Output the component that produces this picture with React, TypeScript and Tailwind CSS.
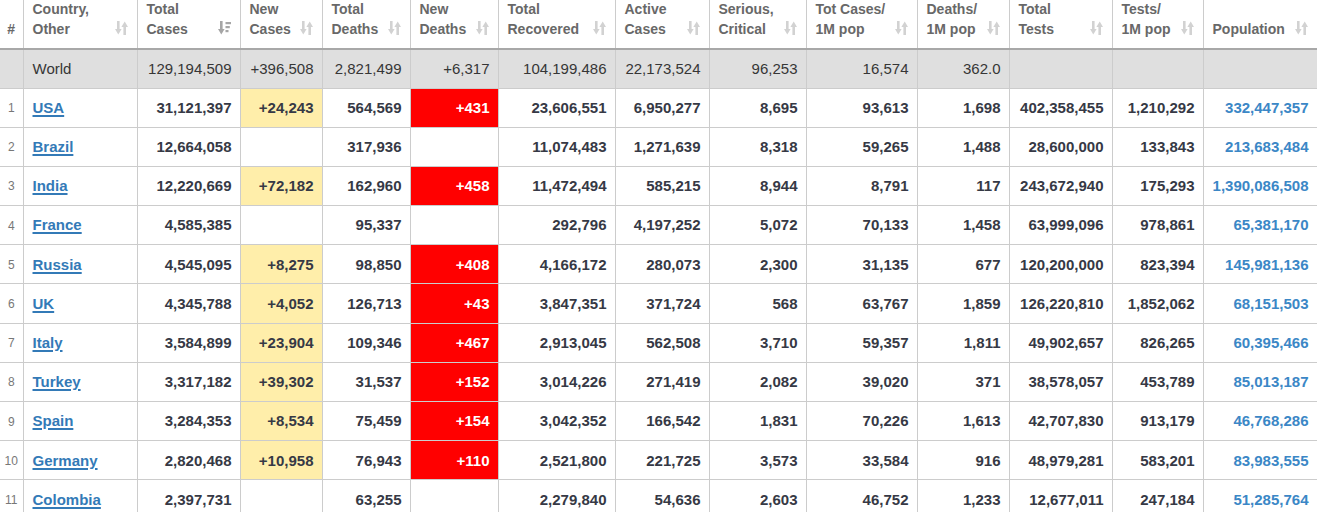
import React from 'react';

type Row = {
  n: number;
  country: string;
  v: string[];
};

const headers: { lines: string[]; sorted?: boolean }[] = [
  { lines: ['', '#'] },
  { lines: ['Country,', 'Other'] },
  { lines: ['Total', 'Cases'], sorted: true },
  { lines: ['New', 'Cases'] },
  { lines: ['Total', 'Deaths'] },
  { lines: ['New', 'Deaths'] },
  { lines: ['Total', 'Recovered'] },
  { lines: ['Active', 'Cases'] },
  { lines: ['Serious,', 'Critical'] },
  { lines: ['Tot Cases/', '1M pop'] },
  { lines: ['Deaths/', '1M pop'] },
  { lines: ['Total', 'Tests'] },
  { lines: ['Tests/', '1M pop'] },
  { lines: ['', 'Population'] },
];

const colWidths = [
  'w-[23px]', 'w-[114px]', 'w-[103px]', 'w-[82px]', 'w-[88px]', 'w-[88px]', 'w-[117px]',
  'w-[94px]', 'w-[97px]', 'w-[111px]', 'w-[92px]', 'w-[103px]', 'w-[91px]', 'w-[114px]',
];

const world = ['129,194,509', '+396,508', '2,821,499', '+6,317', '104,199,486', '22,173,524', '96,253', '16,574', '362.0', '', '', ''];

const rows: Row[] = [
  { n: 1, country: 'USA', v: ['31,121,397', '+24,243', '564,569', '+431', '23,606,551', '6,950,277', '8,695', '93,613', '1,698', '402,358,455', '1,210,292', '332,447,357'] },
  { n: 2, country: 'Brazil', v: ['12,664,058', '', '317,936', '', '11,074,483', '1,271,639', '8,318', '59,265', '1,488', '28,600,000', '133,843', '213,683,484'] },
  { n: 3, country: 'India', v: ['12,220,669', '+72,182', '162,960', '+458', '11,472,494', '585,215', '8,944', '8,791', '117', '243,672,940', '175,293', '1,390,086,508'] },
  { n: 4, country: 'France', v: ['4,585,385', '', '95,337', '', '292,796', '4,197,252', '5,072', '70,133', '1,458', '63,999,096', '978,861', '65,381,170'] },
  { n: 5, country: 'Russia', v: ['4,545,095', '+8,275', '98,850', '+408', '4,166,172', '280,073', '2,300', '31,135', '677', '120,200,000', '823,394', '145,981,136'] },
  { n: 6, country: 'UK', v: ['4,345,788', '+4,052', '126,713', '+43', '3,847,351', '371,724', '568', '63,767', '1,859', '126,220,810', '1,852,062', '68,151,503'] },
  { n: 7, country: 'Italy', v: ['3,584,899', '+23,904', '109,346', '+467', '2,913,045', '562,508', '3,710', '59,357', '1,811', '49,902,657', '826,265', '60,395,466'] },
  { n: 8, country: 'Turkey', v: ['3,317,182', '+39,302', '31,537', '+152', '3,014,226', '271,419', '2,082', '39,020', '371', '38,578,057', '453,789', '85,013,187'] },
  { n: 9, country: 'Spain', v: ['3,284,353', '+8,534', '75,459', '+154', '3,042,352', '166,542', '1,831', '70,226', '1,613', '42,707,830', '913,179', '46,768,286'] },
  { n: 10, country: 'Germany', v: ['2,820,468', '+10,958', '76,943', '+110', '2,521,800', '221,725', '3,573', '33,584', '916', '48,979,281', '583,201', '83,983,555'] },
  { n: 11, country: 'Colombia', v: ['2,397,731', '', '63,255', '', '2,279,840', '54,636', '2,603', '46,752', '1,233', '12,677,011', '247,184', '51,285,764'] },
];

const SortIcon = ({ sorted }: { sorted?: boolean }) =>
  sorted ? (
    <svg width="13" height="14" viewBox="0 0 13 14" className="mb-[4px] shrink-0" fill="#a6a6a6">
      <rect x="2" y="0" width="2.6" height="9" />
      <polygon points="0,8 6.6,8 3.3,13.5" />
      <rect x="7.5" y="1" width="5.5" height="2.2" />
      <rect x="7.5" y="5" width="4.3" height="2.2" />
      <rect x="7.5" y="9" width="3" height="2.2" />
    </svg>
  ) : (
    <svg width="13" height="14" viewBox="0 0 13 14" className="mb-[4px] shrink-0" fill="#d2d2d2">
      <rect x="2" y="0" width="2.6" height="9" />
      <polygon points="0,8 6.6,8 3.3,13.5" />
      <rect x="8.4" y="5" width="2.6" height="9" />
      <polygon points="6.4,6 13,6 9.7,0.5" />
    </svg>
  );

const cellBorder = 'border-r border-b border-[#cccccc]';

export default function App() {
  return (
    <div className="h-[512px] w-[1317px] overflow-hidden bg-white font-['Liberation_Sans',Arial,sans-serif]">
      <table className="table-fixed border-collapse w-[1317px]">
        <colgroup>
          {colWidths.map((w, i) => (
            <col key={i} className={w} />
          ))}
        </colgroup>
        <thead>
          <tr>
            {headers.map((h, i) => (
              <th
                key={i}
                className="h-[48px] p-0 align-bottom border-r border-b-2 border-r-[#cccccc] border-b-[#a8a8a8] text-[14px] font-bold text-[#686868] leading-[20px] text-left"
              >
                {i === 0 ? (
                  <div className="pb-[9px] text-center">#</div>
                ) : (
                  <div className="flex items-end justify-between pl-[9px] pr-[9px] pb-[9px]">
                    <div className="whitespace-nowrap">
                      <div className="h-[19px] leading-[18px]">{h.lines[0]}</div>
                      <div>{h.lines[1]}</div>
                    </div>
                    <SortIcon sorted={h.sorted} />
                  </div>
                )}
              </th>
            ))}
          </tr>
        </thead>
        <tbody>
          <tr className="bg-[#dfdfdf] text-[15px] text-[#363636]">
            <td className={`h-[39px] pt-[1px] ${cellBorder}`}></td>
            <td className={`h-[39px] pt-[1px] pl-[9px] ${cellBorder}`}>World</td>
            {world.map((v, i) => (
              <td key={i} className={`h-[39px] pt-[1px] pr-[8px] text-right ${cellBorder}`}>
                {v}
              </td>
            ))}
          </tr>
          {rows.map((r) => (
            <tr key={r.n} className="text-[15px] font-bold text-[#363945]">
              <td className={`h-[39.2px] pt-[1px] text-center text-[12px] font-normal text-[#777777] ${cellBorder}`}>{r.n}</td>
              <td className={`h-[39.2px] pt-[1px] pl-[9px] ${cellBorder}`}>
                <a href="#" className="text-[#337ab7] underline decoration-2 underline-offset-2">
                  {r.country}
                </a>
              </td>
              {r.v.map((v, i) => {
                let extra = '';
                if (i === 1 && v) extra = 'bg-[#ffeeaa]';
                if (i === 3 && v) extra = 'bg-[#ff0000] text-white';
                if (i === 11) extra = 'text-[#3b87c6]';
                return (
                  <td key={i} className={`h-[39.2px] pt-[1px] pr-[8px] text-right ${extra} ${cellBorder}`}>
                    {v}
                  </td>
                );
              })}
            </tr>
          ))}
        </tbody>
      </table>
    </div>
  );
}
